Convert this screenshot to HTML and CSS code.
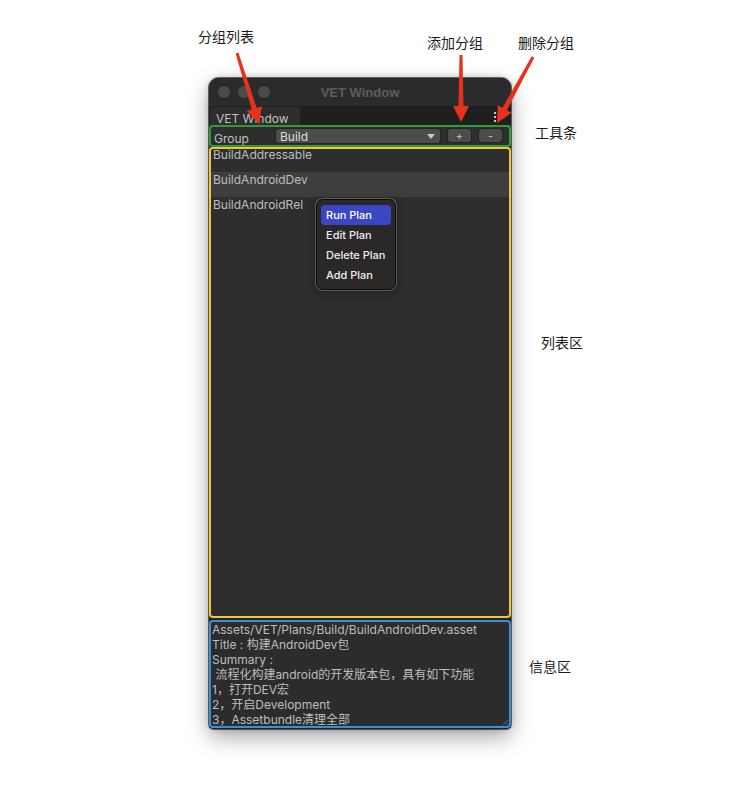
FILE: index.html
```html
<!DOCTYPE html>
<html lang="zh">
<head>
<meta charset="utf-8">
<title>VET Window</title>
<link rel="stylesheet" href="styles.css">
</head>
<body>
<div class="stage">
  <div class="window">
    <div class="titlebar">
      <div class="lights"><span class="light"></span><span class="light"></span><span class="light"></span></div>
      <div class="title">VET Window</div>
      <div></div>
    </div>
    <div class="tabbar">
      <div class="tab">VET Window</div>
      <div class="kebab"><span></span><span></span><span></span></div>
    </div>
    <div class="toolbar annot annot-green">
      <div class="tb-label">Group</div>
      <div class="dropdown"><span>Build</span><span class="caret"></span></div>
      <div class="btn">+</div>
      <div class="btn">-</div>
    </div>
    <div class="list annot annot-yellow">
      <div class="row">BuildAddressable</div>
      <div class="row row-hover">BuildAndroidDev</div>
      <div class="row">BuildAndroidRel</div>
      <div class="menu">
        <div class="mi mi-active">Run Plan</div>
        <div class="mi">Edit Plan</div>
        <div class="mi">Delete Plan</div>
        <div class="mi">Add Plan</div>
      </div>
    </div>
    <div class="info annot annot-blue">
      <div class="line">Assets/VET/Plans/Build/BuildAndroidDev.asset</div>
      <div class="line">Title : 构建AndroidDev包</div>
      <div class="line">Summary :</div>
      <div class="line">&nbsp;流程化构建android的开发版本包，具有如下功能</div>
      <div class="line">1，打开DEV宏</div>
      <div class="line">2，开启Development</div>
      <div class="line">3，Assetbundle清理全部</div>
      <svg class="grip" width="6" height="6" viewBox="0 0 6 6"><path d="M6 1 L1 6 M6 4 L4 6" stroke="#6a6a6a" stroke-width="1"/></svg>
    </div>
  </div>

  <div class="label l-group">分组列表</div>
  <div class="label l-add">添加分组</div>
  <div class="label l-del">删除分组</div>
  <div class="label l-tool">工具条</div>
  <div class="label l-list">列表区</div>
  <div class="label l-info">信息区</div>

  <svg class="arrows" width="738" height="810" viewBox="0 0 738 810">
    <polygon fill="#e5321f" points="238.4,52.6 256.7,108.0 261.9,106.3 259,124 246.7,111.1 251.9,109.4 235.6,53.4"/>
    <polygon fill="#e5321f" points="462.5,55 463.5,106 469,106 461,122 453,106 458.5,106 459.5,55"/>
    <polygon fill="#e5321f" points="534.3,57.7 506.9,110.2 511.7,112.8 497,123 497.7,105.2 502.5,107.8 531.7,56.3"/>
  </svg>
</div>
</body>
</html>
```
FILE: styles.css
```css
* { box-sizing: border-box; }
html, body { margin: 0; padding: 0; background: #ffffff; }
body { font-family: Inter, "Noto Sans CJK SC", sans-serif; }

.stage {
  position: relative;
  width: 738px;
  height: 810px;
  padding: 78px 0 0 209px;
  overflow: hidden;
}

.window {
  width: 302px;
  height: 651px;
  background: #222222;
  border-radius: 10px 10px 5px 5px;
  box-shadow: 0 0 0 1px rgba(0,0,0,0.55), 0 8px 22px rgba(0,0,0,0.35), 0 0 6px rgba(0,0,0,0.2);
  display: flex;
  flex-direction: column;
}

.titlebar {
  height: 28px;
  background: #2b2b2b;
  border-radius: 10px 10px 0 0;
  display: grid;
  grid-template-columns: 1fr auto 1fr;
  align-items: center;
}
.lights { display: flex; gap: 8px; padding-left: 9px; }
.light { width: 12px; height: 12px; border-radius: 50%; background: #4a4a4a; }
.title {
  font-family: "Liberation Sans", Arial, sans-serif;
  font-weight: bold;
  font-size: 13px;
  color: #5d5d5d;
}

.tabbar {
  height: 19px;
  background: #1f1f1f;
  display: flex;
  align-items: flex-end;
  padding-left: 1px;
}
.tab {
  width: 90px;
  height: 18px;
  background: #2d2d2d;
  border-radius: 3px 3px 0 0;
  color: #c0c0c0;
  font-size: 12px;
  line-height: 16px;
  padding: 4px 0 0 6px;
  overflow: hidden;
  white-space: nowrap;
}
.kebab {
  margin-left: auto;
  margin-right: 15px;
  align-self: center;
  display: flex;
  flex-direction: column;
  gap: 2px;
  padding-top: 3px;
}
.kebab span { width: 2px; height: 2px; background: #c8c8c8; }

.annot { position: relative; }
.annot::after {
  content: "";
  position: absolute;
  inset: 0;
  border: 2px solid;
  border-radius: 4px;
  pointer-events: none;
}
.annot-green::after { border-color: #2c9b3c; }
.annot-yellow::after { border-color: #f2c437; }
.annot-blue::after { border-color: #3a91d3; }

.toolbar {
  height: 22px;
  background: #2e2e2e;
  display: flex;
  align-items: flex-start;
  padding: 4px 0 0 5px;
  gap: 8px;
}
.tb-label {
  width: 54px;
  font-size: 12px;
  color: #c0c0c0;
  line-height: 16px;
  padding-top: 2px;
}
.dropdown {
  width: 164px;
  height: 14px;
  background: #4c4c4c;
  border-radius: 3px;
  box-shadow: 0 0 0 1px #242424;
  display: flex;
  align-items: center;
  padding: 0 5px 0 4px;
  font-size: 12px;
  color: #dcdcdc;
}
.caret {
  margin-left: auto;
  width: 0; height: 0;
  border-left: 4px solid transparent;
  border-right: 4px solid transparent;
  border-top: 5px solid #c6c6c6;
}
.btn {
  width: 23px;
  height: 13px;
  background: #4c4c4c;
  border-radius: 3px;
  box-shadow: 0 0 0 1px #242424;
  color: #c4c4c4;
  font-size: 11px;
  line-height: 14px;
  text-align: center;
}

.list {
  height: 471px;
  background: #2e2e2e;
  padding: 0 2px;
}
.row {
  height: 25px;
  padding-left: 2px;
  font-size: 12px;
  line-height: 16px;
  color: #bdbdbd;
}
.row-hover { background: #3e3e3e; }

.menu {
  position: absolute;
  left: 107px;
  top: 52px;
  width: 80px;
  height: 91px;
  background: #2b2828;
  border: 1px solid #0c0c0c;
  border-radius: 7px;
  box-shadow: 0 0 0 1px #5a5a5a, 0 3px 10px rgba(0,0,0,0.35);
  padding: 5px 4px;
}
.mi {
  height: 20px;
  line-height: 20px;
  padding-left: 5px;
  border-radius: 4px;
  font-size: 11px;
  font-weight: 500;
  color: #eeeeee;
}
.mi-active { background: #3b47c2; color: #ffffff; }

.info {
  margin-top: 2px;
  height: 108px;
  background: #2c2c2c;
  padding: 2px 3px 0 3px;
}
.line {
  font-size: 12px;
  line-height: 15px;
  color: #bdbdbd;
  white-space: nowrap;
}
.grip { position: absolute; right: 3px; bottom: 3px; }

.label {
  position: absolute;
  font-family: "Noto Sans CJK SC", sans-serif;
  font-size: 14px;
  line-height: 20px;
  color: #1c1c1c;
  white-space: nowrap;
}
.l-group { left: 198px; top: 26px; }
.l-add { left: 427px; top: 32px; }
.l-del { left: 518px; top: 32px; }
.l-tool { left: 535px; top: 122px; }
.l-list { left: 541px; top: 332px; }
.l-info { left: 529px; top: 656px; }

.arrows { position: absolute; left: 0; top: 0; pointer-events: none; }
```
